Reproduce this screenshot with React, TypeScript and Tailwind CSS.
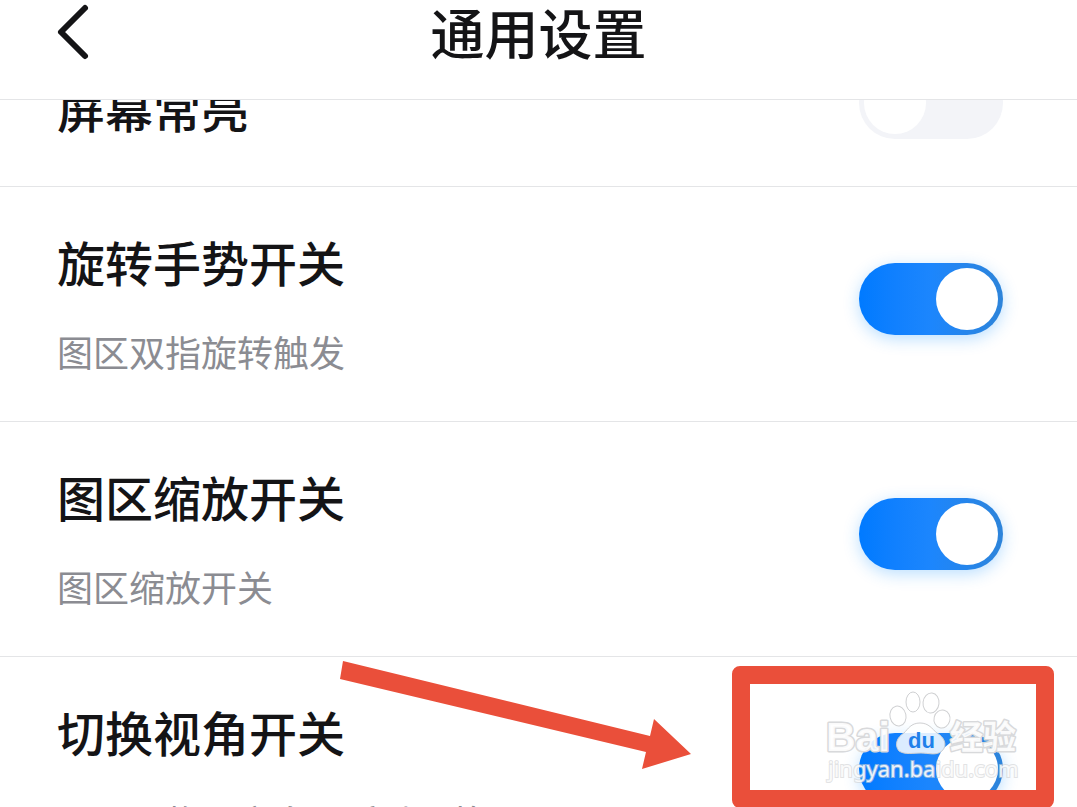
import { useState } from 'react';

interface Setting {
  id: string;
  title: string;
  desc?: string;
  on: boolean;
}

const SETTINGS: Setting[] = [
  { id: 'screen', title: '屏幕常亮', on: false },
  { id: 'rotate', title: '旋转手势开关', desc: '图区双指旋转触发', on: true },
  { id: 'zoom', title: '图区缩放开关', desc: '图区缩放开关', on: true },
  { id: 'view', title: '切换视角开关', desc: '图区里物品方向可手动切换', on: true },
];

function BackIcon() {
  return (
    <svg width="36" height="60" viewBox="0 0 36 60" fill="none" aria-hidden="true">
      <path d="M31 6 L7 30 L31 54" stroke="#141416" strokeWidth="6" strokeLinecap="round" strokeLinejoin="round" />
    </svg>
  );
}

function Toggle({ id, checked, onChange }: { id: string; checked: boolean; onChange: () => void }) {
  return (
    <input
      id={id}
      type="checkbox"
      role="switch"
      checked={checked}
      onChange={onChange}
      className="mb-2 h-[72px] w-36 shrink-0 cursor-pointer appearance-none rounded-full bg-[#f3f4f8] p-[5px] before:block before:size-[62px] before:rounded-full before:bg-white checked:bg-linear-to-r checked:from-[#007aff] checked:via-[#1c86fd] checked:to-[#2d84da] checked:shadow-[0_4px_16px_rgba(30,150,255,0.3)] checked:before:ml-auto"
    />
  );
}

// Arrow pointing at the highlighted switch
function Arrow() {
  return (
    <svg className="pointer-events-none absolute top-1 left-[340px]" width="352" height="110" viewBox="0 0 352 110" aria-hidden="true">
      <path d="M3 0 L310 75 L314 58 L351 93 L302 108 L306 91 L0 18 Z" fill="#ea4f3a" />
    </svg>
  );
}

function Watermark() {
  return (
    <svg
      className="pointer-events-none absolute top-7 right-[50px]"
      width="204"
      height="104"
      viewBox="0 0 204 104"
      role="img"
      aria-label="Baidu 经验"
    >
      <g fill="#fff" fillOpacity="0.85" stroke="#cfd0d2" strokeWidth="1">
        <ellipse cx="75" cy="31" rx="8" ry="10" transform="rotate(-12 75 31)" />
        <ellipse cx="90" cy="17" rx="7" ry="10" />
        <ellipse cx="108" cy="18" rx="8" ry="10" transform="rotate(6 108 18)" />
        <ellipse cx="119" cy="34" rx="8" ry="9" transform="rotate(14 119 34)" />
        <path d="M97 38 C88 38 85 44 81 48 C74 52 71 60 76 66 C82 70 90 68 98 68 C106 68 113 71 119 66 C125 60 121 52 114 48 C109 44 106 38 97 38 Z" />
      </g>
      <g fill="#fff" fillOpacity="0.9" stroke="#d8d9db" strokeWidth="3" paintOrder="stroke" strokeLinejoin="round" fontWeight="700">
        <text x="3" y="66" fontSize="41" fontFamily="'Liberation Sans', sans-serif">Bai</text>
        <text x="127" y="64" fontSize="33" fontFamily="'Noto Sans CJK SC', sans-serif">经验</text>
      </g>
      <text x="85" y="63" fontSize="22" fontWeight="700" fill="#2080ea" fontFamily="'Liberation Sans', sans-serif">du</text>
      <text
        x="5"
        y="92"
        fontSize="22"
        fill="#fff"
        fillOpacity="0.85"
        stroke="#cfd0d2"
        strokeWidth="2"
        strokeOpacity="0.6"
        paintOrder="stroke"
        fontFamily="'Noto Sans', sans-serif"
      >
        jingyan.baidu.com
      </text>
    </svg>
  );
}

export default function App() {
  const [state, setState] = useState<Record<string, boolean>>(
    Object.fromEntries(SETTINGS.map((s) => [s.id, s.on]))
  );

  const toggle = (id: string) => setState((prev) => ({ ...prev, [id]: !prev[id] }));

  return (
    <div className="flex h-screen flex-col overflow-hidden bg-white font-['Noto_Sans_CJK_SC',sans-serif] text-[#141416]">
      <header className="grid h-[100px] shrink-0 grid-cols-[1fr_auto_1fr] items-start border-b border-[#e4e5e7] px-[54px]">
        <button type="button" aria-label="返回" className="w-9 cursor-pointer pt-0.5">
          <BackIcon />
        </button>
        <h1 className="text-[54px] leading-[64px] font-medium">通用设置</h1>
      </header>

      <main className="flex-1 overflow-hidden">
        {/* The list is scrolled a little, so the first row sits partly under the header */}
        <ul className="-mt-[83px]">
          {SETTINGS.map((s) => (
            <li
              key={s.id}
              className={`relative flex items-center justify-between border-b border-[#e4e5e7] pt-[50px] pr-[74px] pl-[57px] ${
                s.desc ? 'pb-[52px]' : 'pb-[39px]'
              }`}
            >
              <label htmlFor={s.id} className="flex cursor-pointer flex-col gap-12">
                <span className="text-[48px] leading-[48px] font-medium">{s.title}</span>
                {s.desc && <span className="text-[36px] leading-[36px] text-[#8b8c92]">{s.desc}</span>}
              </label>
              <Toggle id={s.id} checked={state[s.id]} onChange={() => toggle(s.id)} />
              {s.id === 'view' && (
                <>
                  <Arrow />
                  <Watermark />
                  <div className="pointer-events-none absolute top-[9px] right-[23px] h-[142px] w-[322px] rounded-lg border-[18px] border-[#ea4f3a]" />
                </>
              )}
            </li>
          ))}
        </ul>
      </main>
    </div>
  );
}
